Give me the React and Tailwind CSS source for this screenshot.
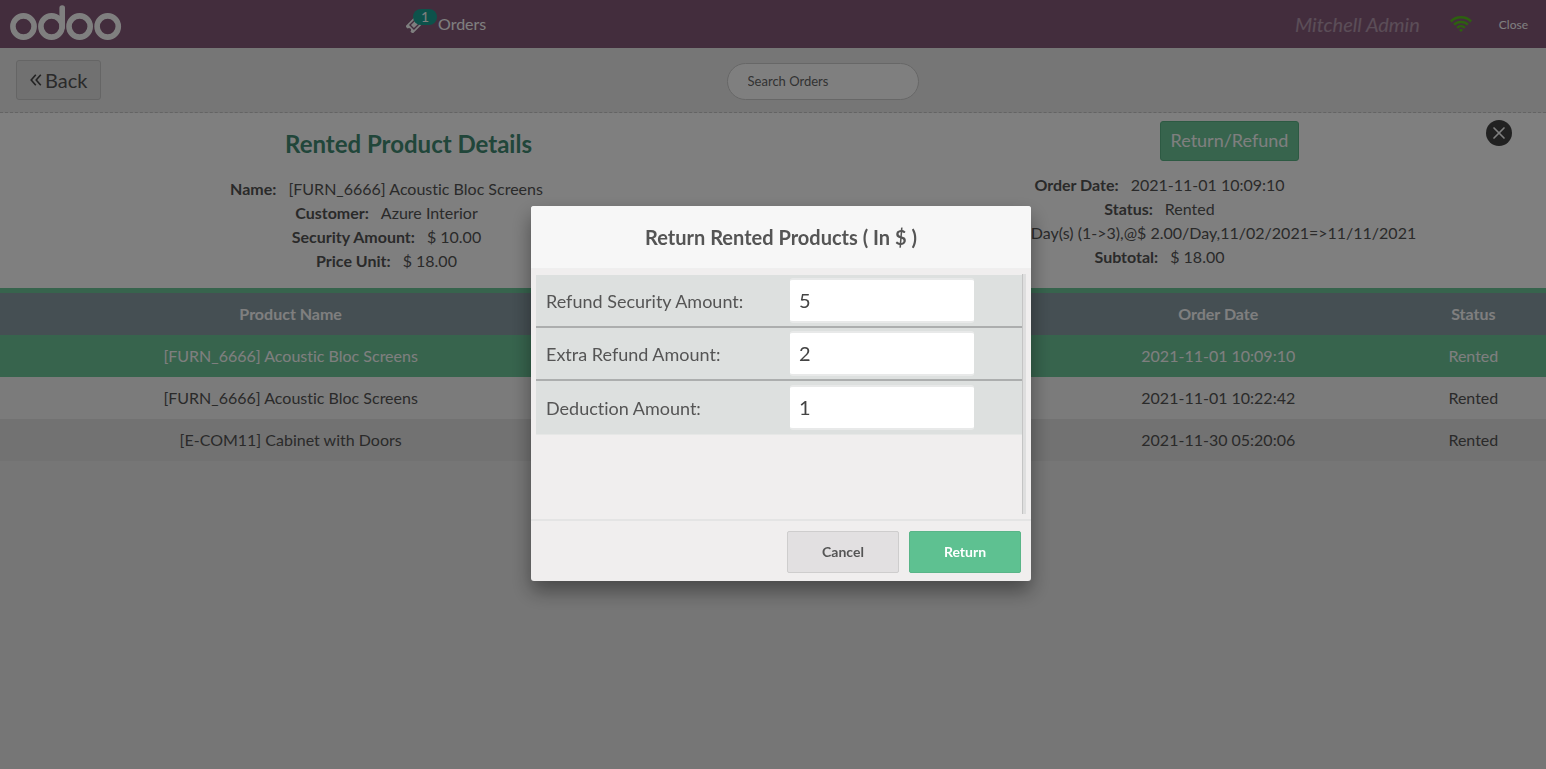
import { X } from "lucide-react";

function OdooLogo() {
  return (
    <svg viewBox="0 0 112 36" className="h-9 w-28" fill="none" stroke="#fff" strokeWidth="5.6" aria-label="odoo" role="img">
      <circle cx="13.5" cy="21.5" r="10.6" />
      <circle cx="41.5" cy="21.5" r="10.6" />
      <circle cx="69.6" cy="21.5" r="10.6" />
      <circle cx="97.7" cy="21.5" r="10.6" />
      <path d="M52.2 3v19" strokeLinecap="round" />
    </svg>
  );
}

function TicketIcon() {
  return (
    <svg viewBox="0 0 18 18" className="h-[18px] w-[18px]" aria-hidden="true">
      <g transform="rotate(-45 9 9)">
        <path
          fill="#fff"
          fillRule="evenodd"
          d="M0.5 3.8h17v3.2a2 2 0 0 0 0 4v3.2h-17v-3.2a2 2 0 0 0 0-4zM4 5.5v7h10V5.5z"
        />
        <rect x="5.4" y="6.9" width="7.2" height="4.2" fill="#fff" />
      </g>
    </svg>
  );
}

function WifiIcon() {
  return (
    <svg viewBox="0 0 22 16" className="h-4 w-[22px]" fill="none" stroke="#5bc01f" strokeWidth="2.5" role="img" aria-label="Connected">
      <path d="M0.9 5.5a14.4 14.4 0 0 1 20.2 0" />
      <path d="M4.1 8.7a9.9 9.9 0 0 1 13.8 0" />
      <path d="M7.2 11.8a5.5 5.5 0 0 1 7.6 0" />
      <path d="M11 16l-2-2.1a2.9 2.9 0 0 1 4 0z" fill="#5bc01f" stroke="none" />
    </svg>
  );
}

function DoubleAngle() {
  return (
    <svg viewBox="0 0 12 12" className="h-3 w-3" fill="none" stroke="#444" strokeWidth="1.6" aria-hidden="true">
      <path d="M5.8 0.8L1.2 6L5.8 11.2M10.8 0.8L6.2 6L10.8 11.2" />
    </svg>
  );
}

function Detail({ label, children }) {
  return (
    <div className="flex justify-center gap-3 whitespace-nowrap">
      <dt className="font-bold">{label}</dt>
      <dd>{children}</dd>
    </div>
  );
}

const orders = [
  { name: "[FURN_6666] Acoustic Bloc Screens", date: "2021-11-01 10:09:10", status: "Rented", row: "bg-[#6ec89b] text-white" },
  { name: "[FURN_6666] Acoustic Bloc Screens", date: "2021-11-01 10:22:42", status: "Rented", row: "bg-[#f7f7f7]" },
  { name: "[E-COM11] Cabinet with Doors", date: "2021-11-30 05:20:06", status: "Rented", row: "bg-[#e4e4e4]" },
];

const fields = [
  { id: "security", label: "Refund Security Amount:", value: "5" },
  { id: "extra", label: "Extra Refund Amount:", value: "2" },
  { id: "deduction", label: "Deduction Amount:", value: "1" },
];

function TopBar() {
  return (
    <header className="grid h-12 grid-cols-[406px_1fr_auto] items-center bg-[#875a7b] text-white">
      <div className="pb-[2px] pl-[10px]">
        <OdooLogo />
      </div>
      <button type="button" className="relative flex items-center gap-[14px] justify-self-start text-base">
        <TicketIcon />
        <span className="absolute -top-[3px] left-[7px] flex h-4 w-6 items-center justify-center rounded-full bg-[#1aa596] text-sm">1</span>
        <span>Orders</span>
      </button>
      <div className="flex items-center pr-[18px]">
        <span className="text-xl italic opacity-40">Mitchell Admin</span>
        <span className="ml-[30px]">
          <WifiIcon />
        </span>
        <button type="button" className="ml-[27px] pt-px text-xs">Close</button>
      </div>
    </header>
  );
}

function Toolbar() {
  return (
    <div className="flex h-[65px] items-center border-b border-dashed border-[#c8c8c8] bg-[#ededed]">
      <div className="w-[47%] pl-4">
        <button type="button" className="flex h-10 items-center gap-[3px] rounded-[3px] border border-[#cacaca] bg-[#e2e2e2] px-[13px] pb-px text-xl">
          <DoubleAngle />
          Back
        </button>
      </div>
      <div className="pt-[2px]">
        <input
          type="search"
          aria-label="Search Orders"
          placeholder="Search Orders"
          className="h-[37px] w-48 rounded-full border border-[#cecece] bg-white px-5 text-[13px] placeholder:text-[#666]"
        />
      </div>
    </div>
  );
}

function Details() {
  return (
    <section className="grid h-[175px] grid-cols-2 bg-white text-base">
      <div>
        <h1 className="pt-[13px] pl-11 text-center text-2xl leading-9 font-bold text-[#428c74]">Rented Product Details</h1>
        <dl className="pt-[15px]">
          <Detail label="Name:">[FURN_6666] Acoustic Bloc Screens</Detail>
          <Detail label="Customer:">Azure Interior</Detail>
          <Detail label="Security Amount:">$ 10.00</Detail>
          <Detail label="Price Unit:">$ 18.00</Detail>
        </dl>
      </div>
      <div>
        <div className="flex items-start justify-between pt-2 pr-[34px] pl-[50%]">
          <button type="button" className="h-10 rounded-[3px] border border-[#5bb587] bg-[#6ec89b] px-[10px] pb-[2px] text-lg text-white">
            Return/Refund
          </button>
          <button type="button" aria-label="Close details" className="-mt-px flex h-[26px] w-[26px] items-center justify-center rounded-full bg-[#424242] text-white">
            <X size={20} strokeWidth={2} />
          </button>
        </div>
        <dl className="pt-3">
          <Detail label="Order Date:">2021-11-01 10:09:10</Detail>
          <Detail label="Status:">Rented</Detail>
          <div className="pl-32 text-center whitespace-nowrap">
            <dd>Day(s) (1-&gt;3),@$ 2.00/Day,11/02/2021=&gt;11/11/2021</dd>
          </div>
          <Detail label="Subtotal:">$ 18.00</Detail>
        </dl>
      </div>
    </section>
  );
}

function OrdersTable() {
  return (
    <div className="border-t-[5px] border-[#6ec89b]">
      <table className="w-full table-fixed text-center text-base">
        <thead className="bg-[#8a9ea6] text-white">
          <tr className="h-[42px]">
            <th className="w-[37.6%]">Product Name</th>
            <td />
            <th className="w-[23.6%]">Order Date</th>
            <th className="w-[9.4%]">Status</th>
          </tr>
        </thead>
        <tbody>
          {orders.map((o) => (
            <tr key={o.date} className={`h-[42px] ${o.row}`}>
              <td>{o.name}</td>
              <td />
              <td>{o.date}</td>
              <td>{o.status}</td>
            </tr>
          ))}
        </tbody>
      </table>
    </div>
  );
}

function ReturnDialog() {
  return (
    <div className="fixed inset-0 flex items-center justify-center bg-black/50 pt-[17px] pl-4">
      <form
        role="dialog"
        aria-labelledby="dialog-title"
        onSubmit={(e) => e.preventDefault()}
        className="w-[500px] rounded-[3px] bg-[#f0eeee] text-[#555] shadow-[0_10px_20px_rgba(0,0,0,0.4)]"
      >
        <h2 id="dialog-title" className="rounded-t-[3px] border-b border-[#efefef] bg-[#f7f7f7] py-4 text-center text-xl leading-[30px] font-bold">
          Return Rented Products ( In $ )
        </h2>
        <div className="flex h-[250px] px-[5px] py-[5px]">
          <div className="flex-1 pt-px">
            {fields.map((f) => (
              <div key={f.id} className="flex h-[53px] items-center border-b-2 border-[#acaeae] bg-[#dde0df] pl-[10px] last:h-[54px] last:border-b last:border-[#e6e7e6]">
                <label htmlFor={f.id} className="w-[244px] pt-[2px] text-lg">{f.label}</label>
                <input
                  id={f.id}
                  type="text"
                  defaultValue={f.value}
                  className="h-[45px] w-[184px] rounded-[3px] border-y-2 border-[#e8e9e9] bg-white px-[9px] text-xl text-[#444] outline-none"
                />
              </div>
            ))}
          </div>
          <div className="w-1 border-l border-[#c4c4c4] bg-[#dedede]" />
        </div>
        <div className="flex justify-end gap-[10px] border-t-2 border-[#e4e4e4] px-[10px] pt-[10px] pb-2 text-sm font-bold">
          <button type="button" className="h-[42px] w-28 rounded-[2px] border border-[#cecdcd] bg-[#e2e0e1]">Cancel</button>
          <button type="submit" className="h-[42px] w-28 rounded-[2px] border border-[#59b588] bg-[#5ec191] text-white">Return</button>
        </div>
      </form>
    </div>
  );
}

export default function App() {
  return (
    <div className="min-h-screen bg-[#ededed] font-['Lato',sans-serif] text-[#555] [font-variant-ligatures:none]">
      <TopBar />
      <Toolbar />
      <Details />
      <OrdersTable />
      <ReturnDialog />
    </div>
  );
}
